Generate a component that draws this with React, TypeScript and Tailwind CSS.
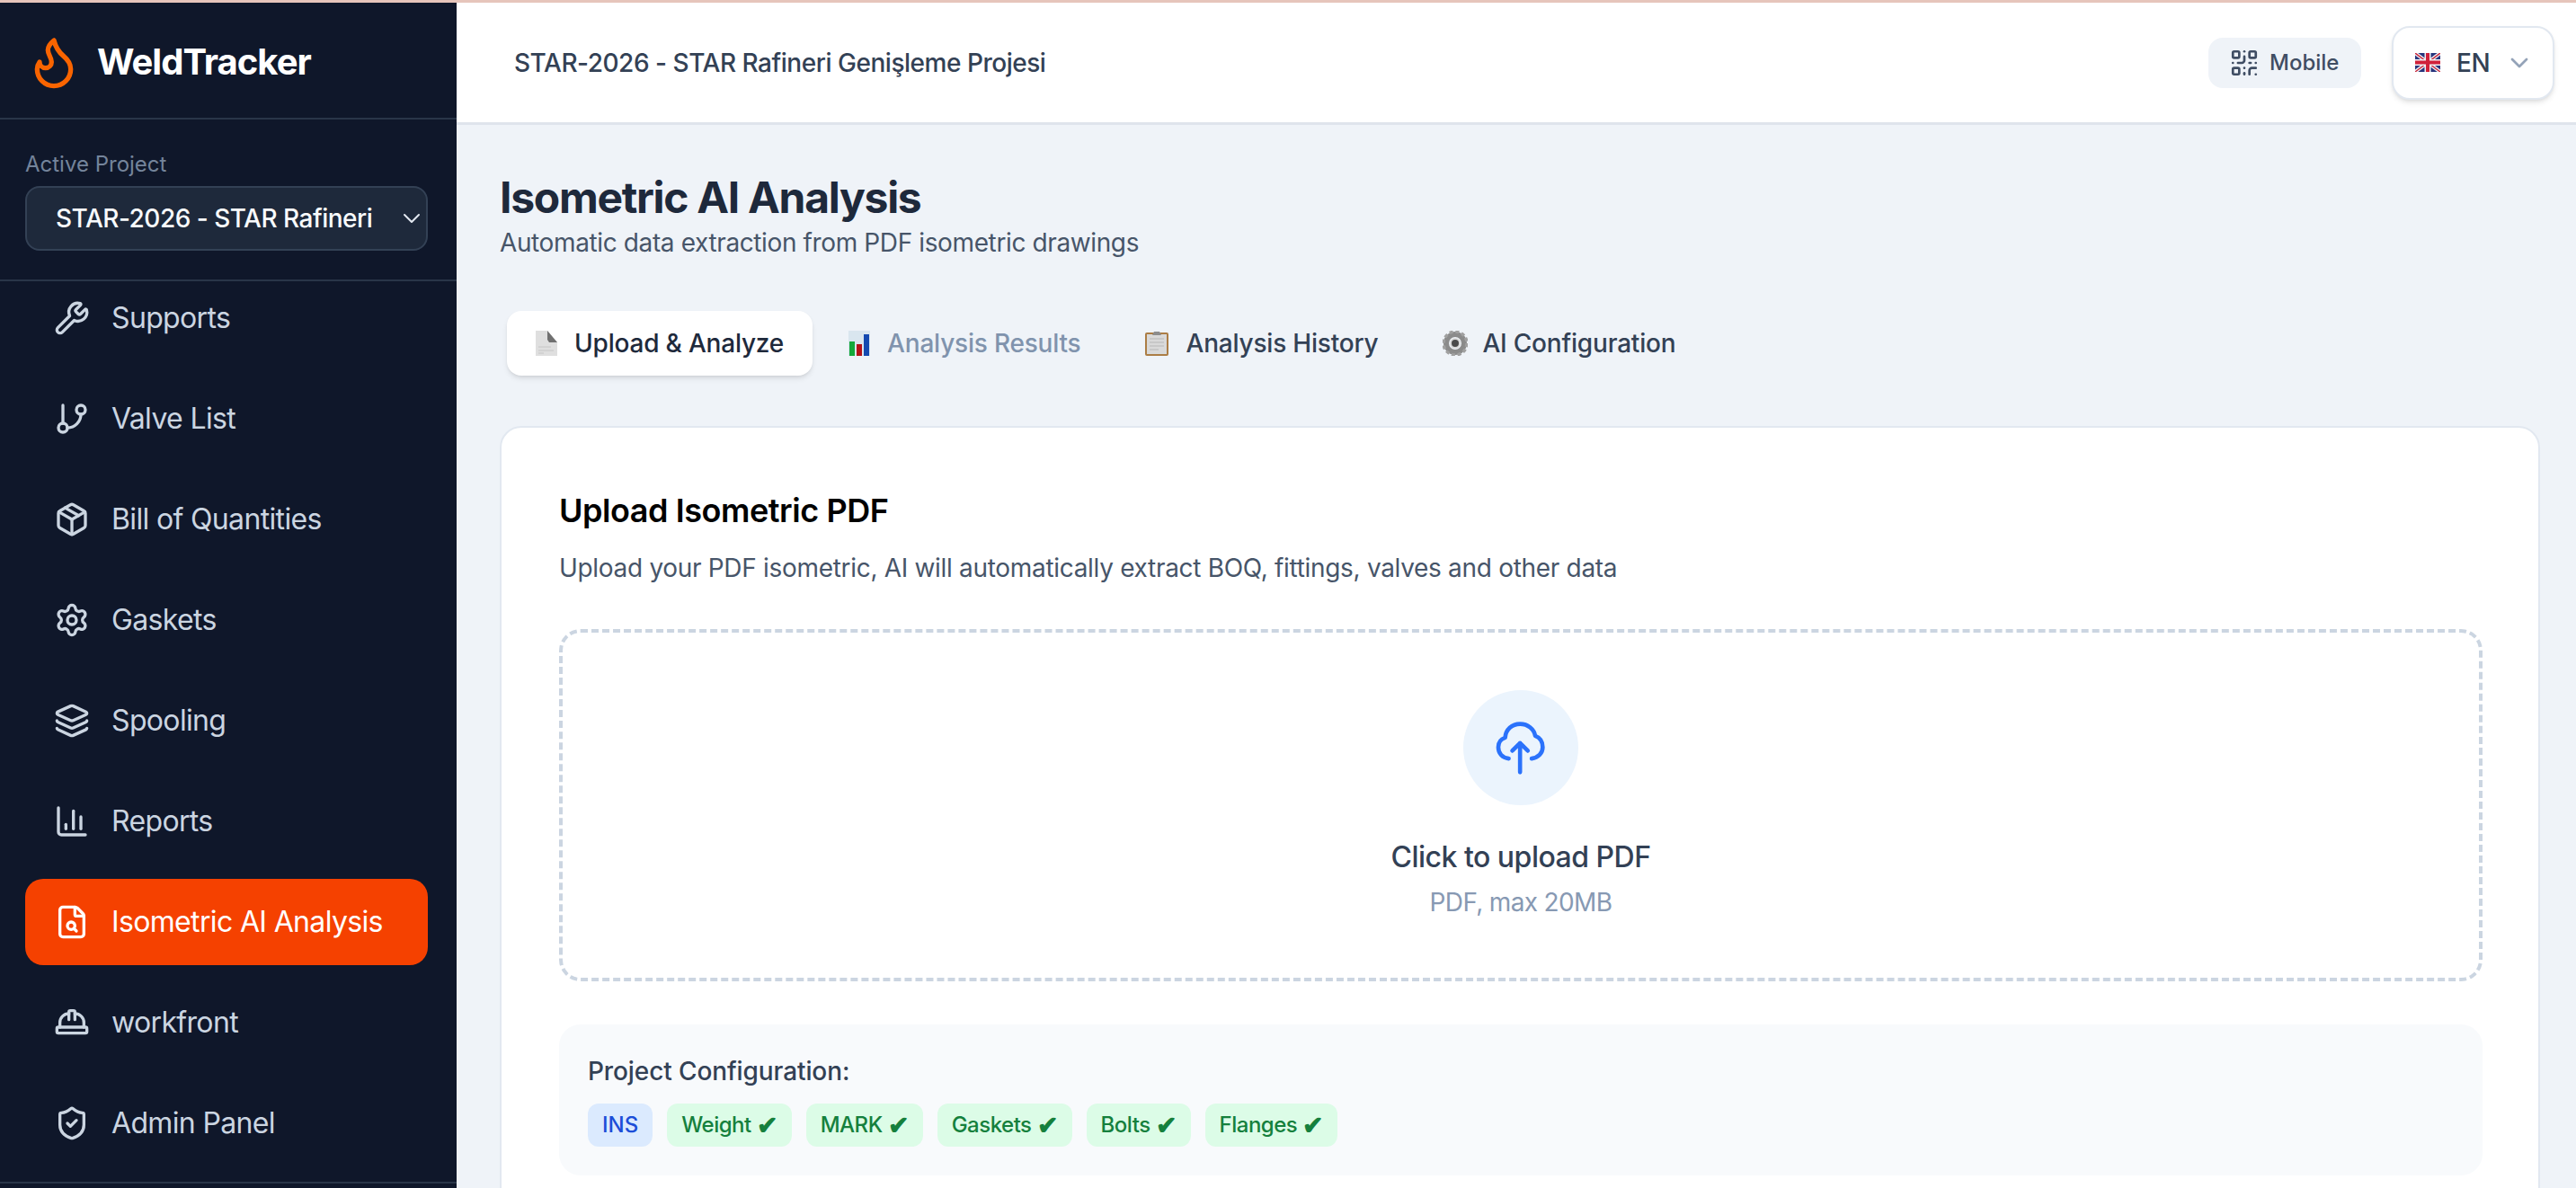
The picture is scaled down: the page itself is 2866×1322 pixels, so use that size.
import {
  ChartColumn,
  ChevronDown,
  Flame,
  GitBranch,
  HardHat,
  Layers,
  Package,
  QrCode,
  Settings,
  ShieldCheck,
  Wrench,
} from "lucide-react";

const FileSearchIcon = () => (
  <svg width="40" height="40" viewBox="0 0 24 24" fill="none" stroke="currentColor" strokeWidth="2" strokeLinecap="round" strokeLinejoin="round">
    <path d="M6 22a2 2 0 0 1-2-2V4a2 2 0 0 1 2-2h8a2.4 2.4 0 0 1 1.704.706l3.588 3.588A2.4 2.4 0 0 1 20 8v12a2 2 0 0 1-2 2z" />
    <path d="M14 2v5a1 1 0 0 0 1 1h5" />
    <circle cx="11.5" cy="14.5" r="2.5" />
    <path d="M13.3 16.3 15 18" />
  </svg>
);

const navItems = [
  { label: "Supports", icon: <Wrench size={40} /> },
  { label: "Valve List", icon: <GitBranch size={40} /> },
  { label: "Bill of Quantities", icon: <Package size={40} /> },
  { label: "Gaskets", icon: <Settings size={40} /> },
  { label: "Spooling", icon: <Layers size={40} /> },
  { label: "Reports", icon: <ChartColumn size={40} /> },
  { label: "Isometric AI Analysis", icon: <FileSearchIcon />, active: true },
  { label: "workfront", icon: <HardHat size={40} /> },
  { label: "Admin Panel", icon: <ShieldCheck size={40} /> },
];

const FlagIcon = () => (
  <svg width="28" height="21" viewBox="0 0 28 21">
    <rect width="28" height="21" y="0" fill="#27347c" />
    <path d="M0 0 28 21M28 0 0 21" stroke="#f1f1f4" strokeWidth="4" />
    <path d="M0 0 28 21M28 0 0 21" stroke="#c8283c" strokeWidth="1.4" />
    <path d="M14 0V21M0 10.5H28" stroke="#f1f1f4" strokeWidth="7" />
    <path d="M14 0V21M0 10.5H28" stroke="#d0213a" strokeWidth="4" />
  </svg>
);

const DocEmoji = () => (
  <svg width="24" height="28" viewBox="0 0 24 28">
    <path d="M0 0H13L24 13V28H0Z" fill="#dfdfdf" />
    <path d="M13 0 24 13H15L13 10Z" fill="#707070" />
    <path d="M3 18H17M3 22H20M3 25H9" stroke="#c6c6c6" strokeWidth="1" />
  </svg>
);

const ChartEmoji = () => (
  <svg width="24" height="28" viewBox="0 0 24 28">
    <rect width="24" height="28" fill="#d9e6ef" />
    <rect x="1" y="12" width="6" height="16" fill="#14a83a" />
    <rect x="9" y="15" width="6" height="13" fill="#b51218" />
    <rect x="17" y="4" width="6" height="24" fill="#1449b0" />
  </svg>
);

const ClipboardEmoji = () => (
  <svg width="26" height="28" viewBox="0 0 26 28">
    <rect width="26" height="26" y="2" rx="2" fill="#ab7d45" />
    <rect x="2" y="4" width="22" height="22" fill="#d9d9d9" />
    <path d="M5 9H21M5 13H21M5 17H21M5 21H15" stroke="#c2c2c2" strokeWidth="1.5" />
    <path d="M8 5 10 1H16L18 5Z" fill="#8d8d8d" />
  </svg>
);

const GearEmoji = () => (
  <svg width="28" height="28" viewBox="0 0 28 28" className="-mr-[3px]">
    <circle cx="14" cy="14" r="10" fill="none" stroke="#8b8b8b" strokeWidth="6" />
    <circle cx="14" cy="14" r="13" fill="none" stroke="#a0a0a0" strokeWidth="3.5" strokeDasharray="4 2.8" />
    <circle cx="14" cy="14" r="6" fill="#d8d8d8" />
    <circle cx="14" cy="14" r="4" fill="#4a4a4a" />
  </svg>
);

const CloudUpload = () => (
  <svg width="58" height="63" viewBox="490 180 175 190" fill="none" stroke="#2b72fb" strokeWidth="14" strokeLinecap="round" strokeLinejoin="round">
    <path d="M537 310C515 308 502 292 502 272C502 256 510 245 525 240C527 212 548 194 575 194C602 194 622 212 626 234C642 240 651 254 651 272C651 292 636 307 614 310" />
    <path d="M575 356V258M549 284 575 258 601 284" />
  </svg>
);

const tabs = [
  { label: "Upload & Analyze", icon: <DocEmoji />, active: true },
  { label: "Analysis Results", icon: <ChartEmoji />, muted: true },
  { label: "Analysis History", icon: <ClipboardEmoji /> },
  { label: "AI Configuration", icon: <GearEmoji /> },
];

const tags = ["Weight", "MARK", "Gaskets", "Bolts", "Flanges"];

const Sidebar = () => (
  <aside className="flex w-[508px] shrink-0 flex-col bg-[#0f172a]">
    <div className="flex h-[130px] shrink-0 items-center gap-4 border-b-2 border-[#293548] pt-[4px] pl-[28px]">
      <Flame size={64} className="text-[#f96400]" />
      <span className="text-[40px] leading-[56px] font-bold tracking-[-1px] text-white">WeldTracker</span>
    </div>
    <div className="flex h-[180px] shrink-0 flex-col border-b-2 border-[#293548] pt-[32px] pr-[32px] pl-[28px]">
      <span className="text-[24px] leading-[36px] text-[#74849b]">Active Project</span>
      <div className="mt-[6px] flex h-[72px] items-center justify-between rounded-2xl border-2 border-[#334155] bg-[#1e293b] pl-[32px]">
        <span className="text-[28px] font-medium tracking-[-0.5px] text-[#f8fafc]">STAR-2026 - STAR Rafineri</span>
        <ChevronDown size={32} strokeWidth={1.5} className="text-[#e2e8f0]" />
      </div>
    </div>
    <nav className="min-h-0 flex-1 overflow-hidden pr-[32px] pl-[28px]">
      <div className="-mt-[7px] flex flex-col gap-4">
        {navItems.map((item) => (
          <div
            key={item.label}
            className={`flex h-24 shrink-0 items-center gap-6 rounded-[20px] px-8 text-[32px] tracking-[-0.65px] ${
              item.active ? "bg-[#f54100] text-white" : "text-[#cbd5e1]"
            }`}
          >
            {item.icon}
            <span>{item.label}</span>
          </div>
        ))}
      </div>
    </nav>
    <div className="h-[7px] shrink-0 border-t-2 border-[#293548]" />
  </aside>
);

const Header = () => (
  <header className="flex h-[136px] shrink-0 items-center justify-between border-b-[3px] border-[#dfe4ec] bg-white pr-[24px] pl-[64px]">
    <span className="text-[28px] font-medium tracking-[-0.47px] text-[#334155]">STAR-2026 - STAR Rafineri Genişleme Projesi</span>
    <div className="flex items-center gap-[34px]">
      <div className="flex h-14 w-[170px] items-center gap-[11px] rounded-2xl bg-[#eff3f8] pl-[23px] text-[24px] font-medium text-[#3f4d63]">
        <QrCode size={34} strokeWidth={1.9} />
        <span>Mobile</span>
      </div>
      <div className="flex h-[82px] w-[181px] items-center rounded-[20px] border-2 border-[#e2e8f0] bg-white pl-[24px] shadow-md">
        <FlagIcon />
        <span className="ml-[18px] text-[28px] font-medium tracking-[-0.5px] text-[#334155]">EN</span>
        <ChevronDown size={32} className="ml-[17px] text-[#94a3b8]" />
      </div>
    </div>
  </header>
);

const UploadCard = () => (
  <section className="rounded-[24px] border-2 border-[#e2e8f0] bg-white py-16 pr-[62px] pl-16">
    <h2 className="text-[36px] leading-[56px] font-semibold tracking-[-0.45px] text-black">Upload Isometric PDF</h2>
    <p className="mt-4 text-[28px] leading-[40px] tracking-[-0.31px] text-[#475569]">
      Upload your PDF isometric, AI will automatically extract BOQ, fittings, valves and other data
    </p>
    <div className="mt-12 flex flex-col items-center rounded-[24px] border-4 border-dashed border-[#cbd5e1] pt-16 pb-16">
      <div className="flex h-32 w-32 items-center justify-center rounded-full bg-[#ebf4fd]">
        <CloudUpload />
      </div>
      <p className="mt-[34px] text-[32px] leading-[48px] font-medium tracking-[-0.5px] text-[#334155]">Click to upload PDF</p>
      <p className="mt-[6px] text-[28px] leading-[40px] tracking-[-0.65px] text-[#8799b3]">PDF, max 20MB</p>
    </div>
    <div className="mt-12 rounded-[24px] bg-[#f8fafc] p-8">
      <p className="text-[28px] leading-[40px] font-medium tracking-[-0.1px] text-[#334155]">Project Configuration:</p>
      <div className="mt-4 flex gap-4">
        <span className="flex h-12 items-center rounded-xl bg-[#dbeafe] px-4 text-[24px] font-medium text-[#1d4ed8]">INS</span>
        {tags.map((tag) => (
          <span key={tag} className="flex h-12 items-center gap-[6px] rounded-xl bg-[#dcfce7] px-4 text-[24px] font-medium tracking-[-0.5px] text-[#15803d]">
            {tag}
            <span className="text-[28px] leading-none font-bold tracking-normal">✔</span>
          </span>
        ))}
      </div>
    </div>
  </section>
);

export default function App() {
  return (
    <div className="flex h-[1322px] w-[2866px] flex-col overflow-hidden bg-[#eff3f8] font-[family-name:Inter,sans-serif]">
      <div className="h-[3px] shrink-0 bg-[#e6c5bb]" />
      <div className="flex min-h-0 flex-1">
        <Sidebar />
        <div className="flex min-w-0 flex-1 flex-col">
          <Header />
          <main className="min-h-0 flex-1 overflow-hidden pt-[49px] pr-10 pl-12">
            <h1 className="text-[48px] leading-[64px] font-bold tracking-[-1.3px] text-[#1e293b]">Isometric AI Analysis</h1>
            <p className="-mt-[2px] text-[28px] leading-[40px] tracking-[-0.38px] text-[#475569]">Automatic data extraction from PDF isometric drawings</p>
            <div className="mt-12 flex gap-2 p-2">
              {tabs.map((tab) => (
                <div
                  key={tab.label}
                  className={`flex h-[72px] items-center gap-[19px] rounded-2xl px-8 text-[28px] font-medium tracking-[-0.2px] ${
                    tab.active ? "bg-white text-[#1e293b] shadow-md" : tab.muted ? "text-[#8093ad]" : "text-[#334155]"
                  }`}
                >
                  {tab.icon}
                  <span>{tab.label}</span>
                </div>
              ))}
            </div>
            <div className="mt-12">
              <UploadCard />
            </div>
          </main>
        </div>
      </div>
    </div>
  );
}
